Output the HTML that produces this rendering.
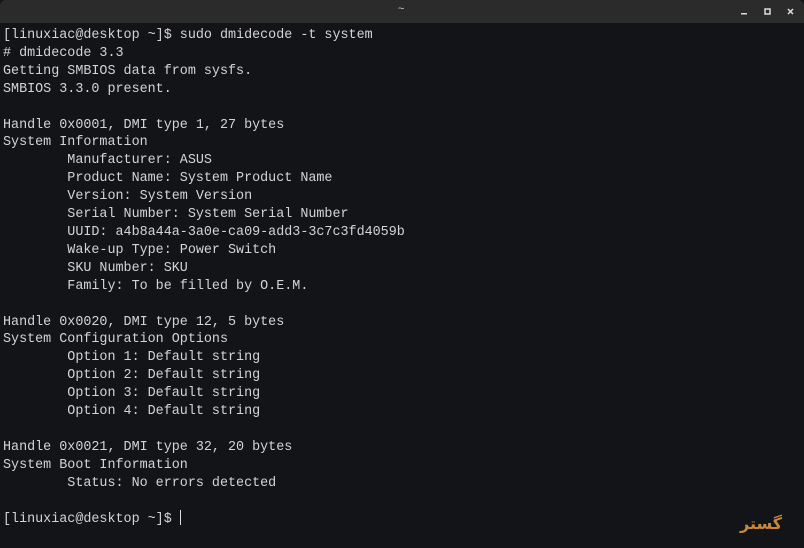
<!DOCTYPE html>
<html><head><meta charset="utf-8"><style>
html,body{margin:0;padding:0;width:804px;height:548px;overflow:hidden;background:#131417;}
.tb{position:absolute;left:0;top:0;width:804px;height:23px;background:#2b2b2c;border-radius:6px 6px 0 0;}
.tb .t{position:absolute;left:398px;top:3px;color:#ccc;font:11px "Liberation Sans",sans-serif;}
pre{position:absolute;left:3px;top:27px;margin:0;font-family:"Liberation Mono",monospace;font-size:13.4px;line-height:17.9px;color:#d4d4d4;}
.cur{display:inline-block;width:1.5px;height:15px;background:#ddd;vertical-align:-3px;}
.logo{position:absolute;left:740px;top:514px;font:bold 16px "Liberation Sans","DejaVu Sans",sans-serif;color:#c9873a;}
</style></head><body>
<div class="tb"><span class="t">~</span>
<svg style="position:absolute;left:738px;top:6px" width="60" height="12"><rect x="3" y="7" width="6" height="1.5" fill="#ddd"/><rect x="27" y="3" width="5" height="5" fill="none" stroke="#ddd" stroke-width="1.5"/><path d="M50 3 L55 8 M55 3 L50 8" stroke="#ddd" stroke-width="1.5"/></svg></div>
<pre>[linuxiac@desktop ~]$ sudo dmidecode -t system
# dmidecode 3.3
Getting SMBIOS data from sysfs.
SMBIOS 3.3.0 present.

Handle 0x0001, DMI type 1, 27 bytes
System Information
        Manufacturer: ASUS
        Product Name: System Product Name
        Version: System Version
        Serial Number: System Serial Number
        UUID: a4b8a44a-3a0e-ca09-add3-3c7c3fd4059b
        Wake-up Type: Power Switch
        SKU Number: SKU
        Family: To be filled by O.E.M.

Handle 0x0020, DMI type 12, 5 bytes
System Configuration Options
        Option 1: Default string
        Option 2: Default string
        Option 3: Default string
        Option 4: Default string

Handle 0x0021, DMI type 32, 20 bytes
System Boot Information
        Status: No errors detected

[linuxiac@desktop ~]$ <span class="cur"></span></pre>
<div class="logo">گستر</div>
</body></html>
